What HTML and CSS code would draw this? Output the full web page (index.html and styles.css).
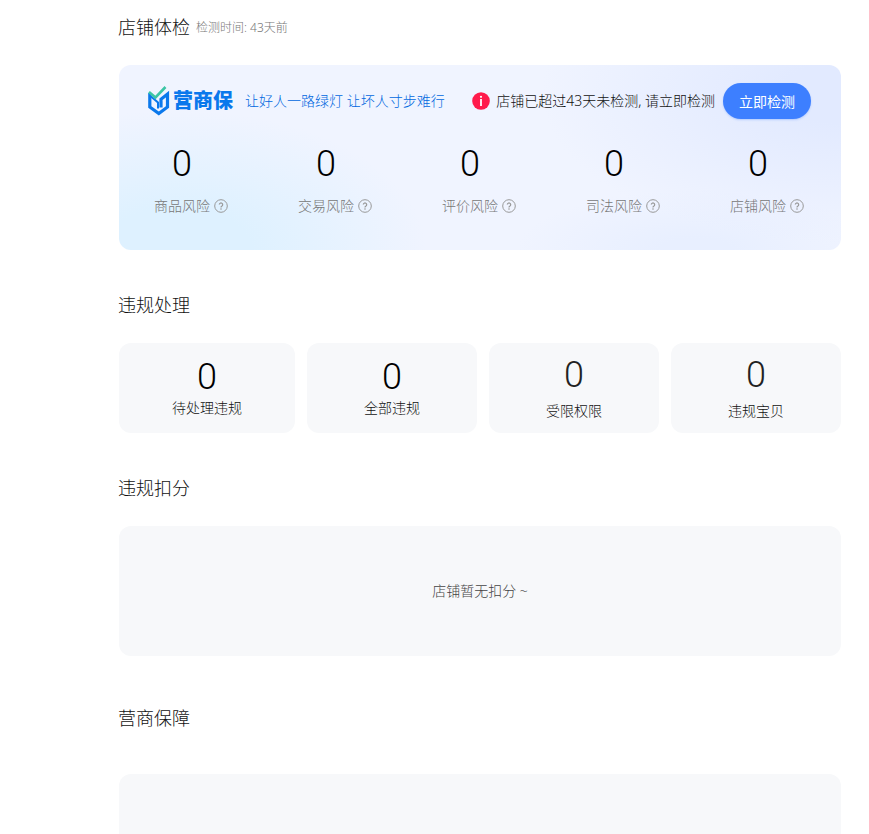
FILE: index.html
```html
<!DOCTYPE html>
<html lang="zh-CN">
<head>
    <meta charset="UTF-8" />
    <title>店铺体检</title>
    <link rel="stylesheet" href="styles.css">
</head>
<body>
    <svg class="sprite" aria-hidden="true">
        <symbol id="icon-help" viewBox="0 0 14 14">
            <circle cx="7" cy="7" r="6.3" fill="none" stroke="currentColor"/>
            <path d="M5.3 5.6a1.7 1.7 0 1 1 2.6 1.5c-.6.3-.9.6-.9 1.300" fill="none" stroke="currentColor" stroke-width="1.200"/>
            <circle cx="7" cy="10" r=".8" fill="currentColor"/>
        </symbol>
    </svg>

    <main>
        <section>
            <div class="section-title">
                <h2>店铺体检</h2>
                <span class="check-time">检测时间: 43天前</span>
            </div>
            <div class="banner">
                <div class="banner-top">
                    <div class="logo">
                        <svg class="logo-mark" viewBox="0 0 22 30" fill="none">
                            <path d="M1.800 7v14l9 6.500 8.700-6.500V8L13 13.200v8.300" stroke="#0a78ec" stroke-width="3.200"/>
                            <path d="M1.800 9.500l8.200 7v6" stroke="#0a78ec" stroke-width="2"/>
                            <path d="M1 6l6.500 5.500L17.500 1" stroke="#3cc5a5" stroke-width="2.600"/>
                        </svg>
                        <span class="logo-text">营商保</span>
                    </div>
                    <span class="slogan">让好人一路绿灯 让坏人寸步难行</span>
                    <div class="notice">
                        <svg class="notice-icon" viewBox="0 0 18 18">
                            <circle cx="9" cy="9" r="8.800" fill="#ff1a4b"/>
                            <circle cx="9" cy="4.800" r="1.100" fill="#fff"/>
                            <path d="M9 7v7" fill="none" stroke="#fff" stroke-width="1.800"/>
                        </svg>
                        <span>店铺已超过43天未检测, 请立即检测</span>
                        <button type="button" class="check-btn">立即检测</button>
                    </div>
                </div>
                <div class="risk-list">
                    <div class="risk">
                        <span class="num">0</span>
                        <span class="risk-label">商品风险</span>
                        <svg class="help"><use href="#icon-help"/></svg>
                    </div>
                    <div class="risk">
                        <span class="num">0</span>
                        <span class="risk-label">交易风险</span>
                        <svg class="help"><use href="#icon-help"/></svg>
                    </div>
                    <div class="risk">
                        <span class="num">0</span>
                        <span class="risk-label">评价风险</span>
                        <svg class="help"><use href="#icon-help"/></svg>
                    </div>
                    <div class="risk">
                        <span class="num">0</span>
                        <span class="risk-label">司法风险</span>
                        <svg class="help"><use href="#icon-help"/></svg>
                    </div>
                    <div class="risk">
                        <span class="num">0</span>
                        <span class="risk-label">店铺风险</span>
                        <svg class="help"><use href="#icon-help"/></svg>
                    </div>
                </div>
            </div>
        </section>

        <section>
            <div class="section-title">
                <h2>违规处理</h2>
            </div>
            <div class="card-list">
                <div class="card">
                    <span class="num">0</span>
                    <span>待处理违规</span>
                </div>
                <div class="card">
                    <span class="num">0</span>
                    <span>全部违规</span>
                </div>
                <div class="card card-loose">
                    <span class="num">0</span>
                    <span>受限权限</span>
                </div>
                <div class="card card-loose">
                    <span class="num">0</span>
                    <span>违规宝贝</span>
                </div>
            </div>
        </section>

        <section>
            <div class="section-title">
                <h2>违规扣分</h2>
            </div>
            <div class="panel">店铺暂无扣分 ~</div>
        </section>

        <section class="guarantee">
            <div class="section-title">
                <h2>营商保障</h2>
            </div>
            <div class="panel"></div>
        </section>
    </main>
</body>
</html>
```
FILE: styles.css
```css
* {
    margin: 0;
    padding: 0;
    box-sizing: border-box;
}
body {
    display: flex;
    flex-direction: column;
    height: 100vh;
    overflow: hidden;
    background-color: #fff;
    color: #111;
    font-family: "Noto Sans", "Noto Sans CJK SC", sans-serif;
    font-size: 14px;
    font-weight: 300;
    line-height: 22px;
}

.sprite {
    display: none;
}

main {
    flex: 1;
    display: flex;
    flex-direction: column;
    padding: 14px 28px 0 118px;
}

section {
    margin-bottom: 42px;
}

.section-title {
    display: flex;
    align-items: center;
    gap: 6px;
    height: 26px;
    margin-bottom: 25px;
}

.section-title h2 {
    font-size: 18px;
    font-weight: 300;
    line-height: 26px;
}

.check-time {
    padding-top: 2px;
    font-size: 12px;
    color: #777;
}

.num {
    font-family: Roboto, "Noto Sans", sans-serif;
    font-size: 36px;
    font-weight: 300;
    line-height: 40px;
    color: #000;
}

/* banner */
.banner {
    margin-left: 1px;
    padding: 18px 0 33px;
    border-radius: 12px;
    background:
        radial-gradient(ellipse 250px 140px at 8% 100%, #def1ff 30%, rgba(222, 241, 255, 0) 100%),
        radial-gradient(ellipse 300px 150px at 100% 15%, #e2eaff 20%, rgba(226, 234, 255, 0) 100%),
        radial-gradient(ellipse 180px 60px at 80% 100%, #e8efff 20%, rgba(232, 239, 255, 0) 100%),
        #f0f4ff;
}

.banner-top {
    display: flex;
    align-items: center;
    padding: 0 30px 0 29px;
    margin-bottom: 25px;
    white-space: nowrap;
}

.logo {
    display: flex;
    align-items: center;
    gap: 3px;
    margin-right: 12px;
}

.logo-mark {
    width: 22px;
    height: 30px;
}

.logo-text {
    font-size: 20px;
    font-weight: 900;
    color: #0a78ec;
}

.slogan {
    color: #0068e0;
}

.notice {
    display: flex;
    align-items: center;
    margin-left: auto;
}

.notice-icon {
    width: 18px;
    height: 18px;
    margin-right: 6px;
}

.check-btn {
    width: 88px;
    height: 36px;
    margin-left: 8px;
    border: none;
    border-radius: 18px;
    background-color: #3d7fff;
    box-shadow: 0 1px 2px rgba(61, 127, 255, 0.3);
    color: #fff;
    font-family: inherit;
    font-size: 14px;
    font-weight: 400;
    cursor: pointer;
}

.risk-list {
    display: grid;
    grid-template-columns: repeat(5, 1fr);
    padding-right: 2px;
}

.risk {
    display: grid;
    grid-template-columns: auto 14px;
    justify-content: center;
    align-items: center;
    gap: 11px 4px;
    color: #777;
}

.risk .num {
    text-align: center;
}

.risk-label {
    grid-row: 2;
}

.help {
    grid-row: 2;
    width: 14px;
    height: 14px;
    color: #999;
}

/* violation cards */
.card-list {
    display: grid;
    grid-template-columns: 176fr 170fr 170fr 170fr;
    gap: 12px;
    margin-left: 1px;
}

.card {
    display: flex;
    flex-direction: column;
    align-items: center;
    height: 90px;
    padding-top: 14px;
    border-radius: 12px;
    background-color: #f7f8fa;
}

.card-loose {
    gap: 5px;
    padding-top: 12px;
}

.card-loose .num {
    color: #222;
}

.panel {
    display: flex;
    justify-content: center;
    align-items: center;
    min-height: 130px;
    margin-left: 1px;
    border-radius: 12px;
    background-color: #f7f8fa;
    color: #444;
}

/* last block fills what is left of the window */
.guarantee {
    flex: 1;
    display: flex;
    flex-direction: column;
    min-height: 0;
    margin-bottom: 0;
    padding-top: 7px;
}

.guarantee .section-title {
    flex-shrink: 0;
    margin-bottom: 43px;
}

.guarantee .panel {
    flex: 1;
    min-height: 0;
    border-radius: 12px 12px 0 0;
}
```
